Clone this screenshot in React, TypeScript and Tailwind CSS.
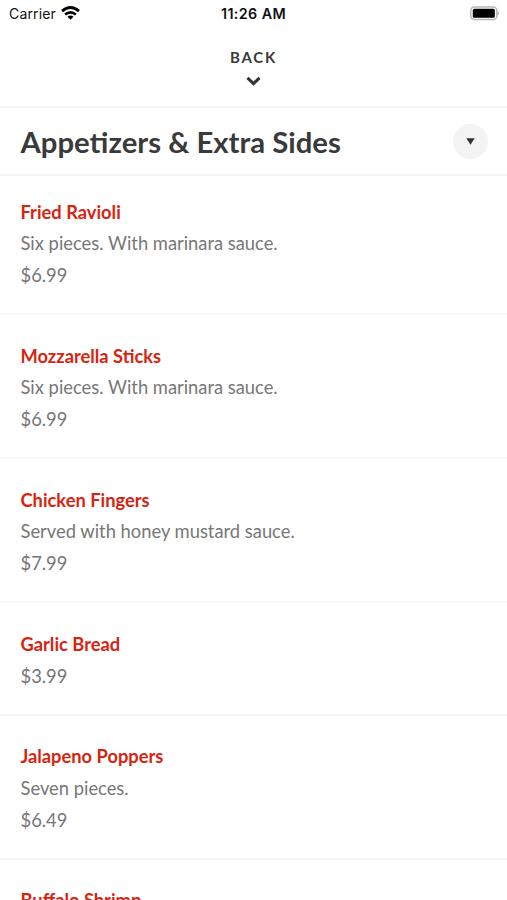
import React from "react";

type Item = { name: string; description?: string; price?: string };

const items: Item[] = [
  { name: "Fried Ravioli", description: "Six pieces. With marinara sauce.", price: "$6.99" },
  { name: "Mozzarella Sticks", description: "Six pieces. With marinara sauce.", price: "$6.99" },
  { name: "Chicken Fingers", description: "Served with honey mustard sauce.", price: "$7.99" },
  { name: "Garlic Bread", price: "$3.99" },
  { name: "Jalapeno Poppers", description: "Seven pieces.", price: "$6.49" },
  { name: "Buffalo Shrimp" },
];

function StatusBar() {
  return (
    <div className="grid h-[26px] shrink-0 grid-cols-3 items-center px-[8px] pt-px font-['Inter',sans-serif] text-[14px] text-[#111]">
      <div className="flex items-center gap-[5px] pl-px">
        <span className="tracking-[0.15px]">Carrier</span>
        <svg className="-mt-0.5" width="19" height="14" viewBox="0 0 19 14" fill="none" stroke="black">
          <path d="M1 5.2 Q9.5 -2 18 5.2" strokeWidth="2.9" />
          <path d="M4.1 8.6 Q9.5 4.1 14.9 8.6" strokeWidth="2.6" />
          <path d="M9.5 13.7 L6.5 10.8 Q9.5 8.3 12.5 10.8 Z" fill="black" stroke="none" />
        </svg>
      </div>
      <span className="text-center text-[14.3px] font-semibold tracking-[0.4px]">11:26 AM</span>
      <svg className="justify-self-end" width="30" height="15" viewBox="0 0 30 15">
        <rect x="1.8" y="0.9" width="26" height="12.7" rx="3.5" fill="none" stroke="#b8b8b8" strokeWidth="1.5" />
        <rect x="3.8" y="2.7" width="22" height="9.1" rx="1.5" fill="black" />
        <path d="M28.6 5 Q31.2 7.2 28.6 9.5Z" fill="#aaa" />
      </svg>
    </div>
  );
}

export default function App() {
  return (
    <main className="flex h-[900px] w-[507px] flex-col overflow-hidden bg-white font-['Lato',sans-serif]">
      <StatusBar />
      <button className="flex h-[82px] shrink-0 flex-col items-center border-b-2 border-[#f5f5f5] pt-[21px] text-[#3a3a3a]">
        <span className="text-[15px] font-bold leading-5 tracking-[1.8px]">BACK</span>
        <svg className="-ml-px mt-[9px]" width="15" height="11" viewBox="0 0 15 11" fill="none" stroke="#333" strokeWidth="3">
          <path d="M1.5 1.8 L7.5 7.6 L13.5 1.8" />
        </svg>
      </button>
      <header className="flex h-[68px] shrink-0 items-center justify-between border-b-2 border-[#f5f5f5] pl-[20.5px] pr-[19px]">
        <h1 className="pt-[2px] text-[29.3px] font-bold leading-9 text-[#3a3a3a]">Appetizers &amp; Extra Sides</h1>
        <button className="flex size-[35px] items-center justify-center rounded-full bg-[#f3f3f3]">
          <svg width="9" height="7" viewBox="0 0 9 7"><path d="M0.3 0.3H8.7L4.5 6.7Z" fill="#333" /></svg>
        </button>
      </header>
      <div className="-mt-[5px]">
        {items.map((item) => (
          <article key={item.name} className="border-b-2 border-[#f5f5f5] pb-[21.4px] pl-[20.5px] pt-[25.6px] text-[18.35px] leading-[31.7px] text-[#777]">
            <h2 className="text-[18.3px] font-bold text-[#d8240f]">{item.name}</h2>
            {item.description && <p>{item.description}</p>}
            {item.price && <p>{item.price}</p>}
          </article>
        ))}
      </div>
    </main>
  );
}
